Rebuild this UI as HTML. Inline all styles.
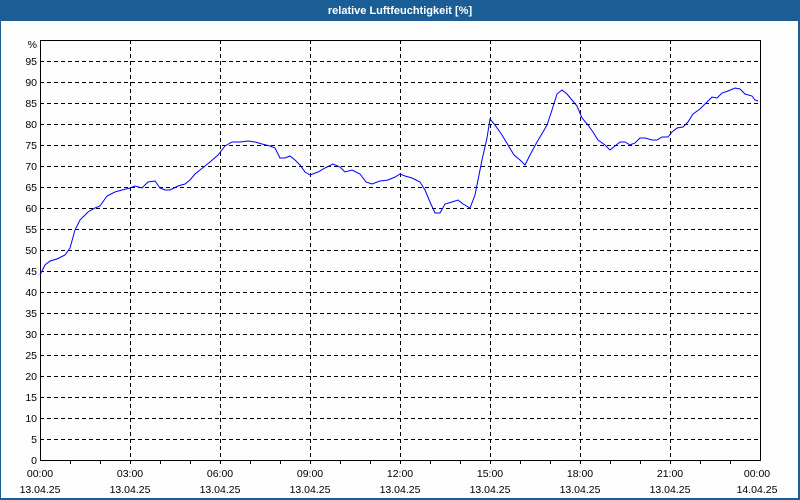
<!DOCTYPE html>
<html><head><meta charset="utf-8"><style>
body{margin:0;width:800px;height:500px;overflow:hidden;background:#fcfdfc;font-family:"Liberation Sans",sans-serif}
</style></head><body>
<svg width="800" height="500" xmlns="http://www.w3.org/2000/svg" style="display:block">
<rect x="0" y="0" width="800" height="500" fill="#fcfdfc"/>
<rect x="0" y="0" width="800" height="21" fill="#1b5e96"/>
<rect x="0" y="0" width="1" height="500" fill="#1b5e96"/>
<rect x="798" y="0" width="2" height="500" fill="#1b5e96"/>
<rect x="0" y="498" width="800" height="2" fill="#1b5e96"/>
<text x="400" y="14" fill="#fff" font-size="11" font-weight="bold" text-anchor="middle" font-family="Liberation Sans, sans-serif">relative Luftfeuchtigkeit [%]</text>
<g stroke="#000" stroke-width="1" stroke-dasharray="4,3" shape-rendering="crispEdges">
<line x1="40" y1="61.5" x2="760" y2="61.5"/><line x1="40" y1="82.5" x2="760" y2="82.5"/><line x1="40" y1="103.5" x2="760" y2="103.5"/><line x1="40" y1="124.5" x2="760" y2="124.5"/><line x1="40" y1="145.5" x2="760" y2="145.5"/><line x1="40" y1="166.5" x2="760" y2="166.5"/><line x1="40" y1="187.5" x2="760" y2="187.5"/><line x1="40" y1="208.5" x2="760" y2="208.5"/><line x1="40" y1="229.5" x2="760" y2="229.5"/><line x1="40" y1="250.5" x2="760" y2="250.5"/><line x1="40" y1="271.5" x2="760" y2="271.5"/><line x1="40" y1="292.5" x2="760" y2="292.5"/><line x1="40" y1="313.5" x2="760" y2="313.5"/><line x1="40" y1="334.5" x2="760" y2="334.5"/><line x1="40" y1="355.5" x2="760" y2="355.5"/><line x1="40" y1="376.5" x2="760" y2="376.5"/><line x1="40" y1="397.5" x2="760" y2="397.5"/><line x1="40" y1="418.5" x2="760" y2="418.5"/><line x1="40" y1="439.5" x2="760" y2="439.5"/>
<line x1="130.5" y1="40" x2="130.5" y2="460"/><line x1="220.5" y1="40" x2="220.5" y2="460"/><line x1="310.5" y1="40" x2="310.5" y2="460"/><line x1="400.5" y1="40" x2="400.5" y2="460"/><line x1="490.5" y1="40" x2="490.5" y2="460"/><line x1="580.5" y1="40" x2="580.5" y2="460"/><line x1="670.5" y1="40" x2="670.5" y2="460"/>
</g>
<g stroke="#000" stroke-width="1" shape-rendering="crispEdges">
<rect x="40.5" y="40.5" width="720" height="420" fill="none"/>
<line x1="70.5" y1="460" x2="70.5" y2="464"/><line x1="100.5" y1="460" x2="100.5" y2="464"/><line x1="130.5" y1="460" x2="130.5" y2="464"/><line x1="160.5" y1="460" x2="160.5" y2="464"/><line x1="190.5" y1="460" x2="190.5" y2="464"/><line x1="220.5" y1="460" x2="220.5" y2="464"/><line x1="250.5" y1="460" x2="250.5" y2="464"/><line x1="280.5" y1="460" x2="280.5" y2="464"/><line x1="310.5" y1="460" x2="310.5" y2="464"/><line x1="340.5" y1="460" x2="340.5" y2="464"/><line x1="370.5" y1="460" x2="370.5" y2="464"/><line x1="400.5" y1="460" x2="400.5" y2="464"/><line x1="430.5" y1="460" x2="430.5" y2="464"/><line x1="460.5" y1="460" x2="460.5" y2="464"/><line x1="490.5" y1="460" x2="490.5" y2="464"/><line x1="520.5" y1="460" x2="520.5" y2="464"/><line x1="550.5" y1="460" x2="550.5" y2="464"/><line x1="580.5" y1="460" x2="580.5" y2="464"/><line x1="610.5" y1="460" x2="610.5" y2="464"/><line x1="640.5" y1="460" x2="640.5" y2="464"/><line x1="670.5" y1="460" x2="670.5" y2="464"/><line x1="700.5" y1="460" x2="700.5" y2="464"/><line x1="730.5" y1="460" x2="730.5" y2="464"/>
</g>
<g font-size="10.5" fill="#000" text-anchor="end" font-family="Liberation Sans, sans-serif">
<text x="37" y="48">%</text><text x="37" y="65">95</text><text x="37" y="86">90</text><text x="37" y="107">85</text><text x="37" y="128">80</text><text x="37" y="149">75</text><text x="37" y="170">70</text><text x="37" y="191">65</text><text x="37" y="212">60</text><text x="37" y="233">55</text><text x="37" y="254">50</text><text x="37" y="275">45</text><text x="37" y="296">40</text><text x="37" y="317">35</text><text x="37" y="338">30</text><text x="37" y="359">25</text><text x="37" y="380">20</text><text x="37" y="401">15</text><text x="37" y="422">10</text><text x="37" y="443">5</text><text x="37" y="464">0</text>
</g>
<g font-size="10.5" fill="#000" text-anchor="middle" font-family="Liberation Sans, sans-serif">
<text x="40" y="477">00:00</text><text x="130" y="477">03:00</text><text x="220" y="477">06:00</text><text x="310" y="477">09:00</text><text x="400" y="477">12:00</text><text x="490" y="477">15:00</text><text x="580" y="477">18:00</text><text x="670" y="477">21:00</text><text x="757" y="477">00:00</text>
<text x="40" y="493">13.04.25</text><text x="130" y="493">13.04.25</text><text x="220" y="493">13.04.25</text><text x="310" y="493">13.04.25</text><text x="400" y="493">13.04.25</text><text x="490" y="493">13.04.25</text><text x="580" y="493">13.04.25</text><text x="670" y="493">13.04.25</text><text x="757" y="493">14.04.25</text>
</g>
<polyline fill="none" stroke="#0000ff" stroke-width="1" points="40,275 45,265 50,261 57,259 65,255 70,248 75,230 80,220 88,212 95,208 100,206 107,196 115,192 122,190 130,188 135,186 142,188 148,182 155,181 160,188 165,190 170,190 178,186 185,184 190,180 195,174 200,170 210,162 218,155 225,146 232,142 240,142 248,141 255,142 262,144 270,146 275,148 280,158 285,158 290,156 295,160 300,165 305,172 310,175 318,172 325,168 333,164 340,167 345,172 352,170 360,174 366,182 372,184 380,181 388,180 395,177 400,174 405,176 412,178 420,182 425,190 430,202 435,213 440,213 445,204 452,202 458,200 463,204 470,208 475,195 478,180 482,160 487,138 490,119 495,125 502,135 508,145 514,155 520,160 525,165 530,155 537,142 543,132 547,125 552,110 557,94 562,90 567,94 572,100 577,106 582,118 588,125 593,132 598,140 605,145 610,150 615,146 620,142 625,142 630,145 635,143 640,138 645,138 652,140 657,140 662,137 668,137 672,132 677,128 683,127 688,122 693,114 700,109 707,102 712,97 717,98 722,93 728,91 735,88 740,89 745,94 752,96 755,100 758,101"/>
</svg>
</body></html>
